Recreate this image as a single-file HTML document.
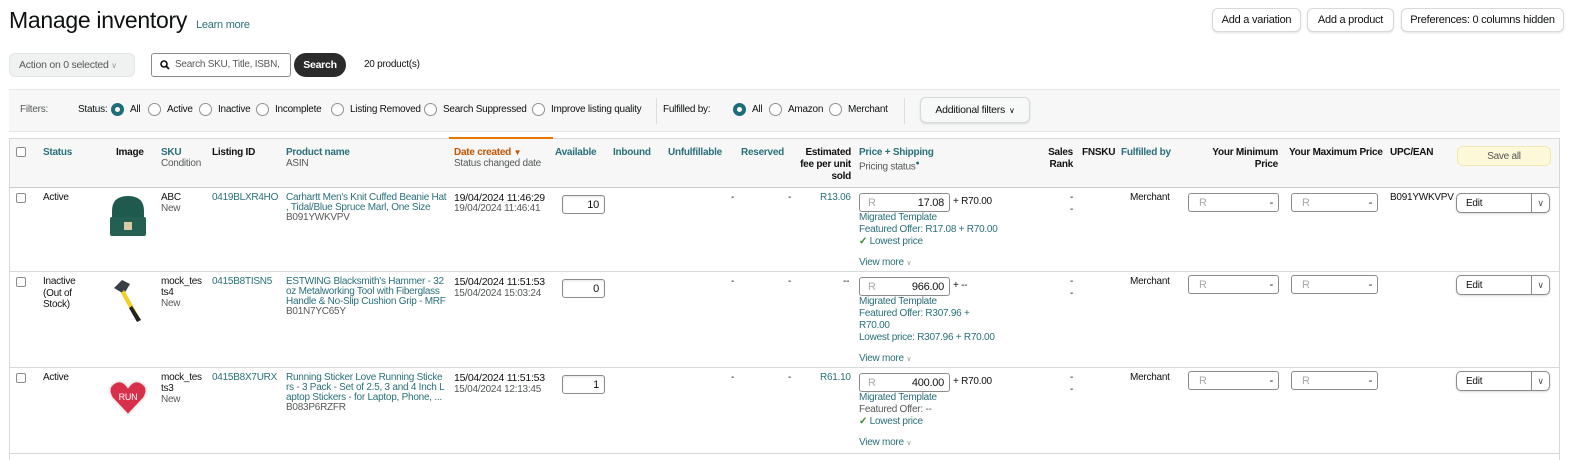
<!DOCTYPE html>
<html><head><meta charset="utf-8">
<style>
*{box-sizing:border-box;margin:0;padding:0}
body{width:1589px;height:460px;overflow:hidden;background:#fff;font-family:"Liberation Sans",sans-serif;font-size:10px;color:#0f1111;position:relative;letter-spacing:-0.25px}
.a{position:absolute;white-space:nowrap;line-height:12px}
.b{font-weight:bold}
.l{color:#2a6f7a}
.g{color:#565959}
.o{color:#c45500}
.btn{position:absolute;border:1px solid #d5d9d9;border-radius:6px;background:#fff;box-shadow:0 1px 2px rgba(0,0,0,.12);font-size:11px;display:flex;align-items:center;justify-content:center}
.rad{position:absolute;width:13px;height:13px;border:1px solid #8d9096;border-radius:50%;background:#fff}
.rad.on{border:4px solid #1f6d7a}
.cb{position:absolute;width:10px;height:10px;border:1px solid #888c8c;border-radius:2px;background:#fff}
.inp{position:absolute;border:1px solid #888c8c;border-radius:3px;background:#fff;height:19px;font-size:11px;padding:0 5px;display:flex;align-items:center;justify-content:flex-end;box-shadow:inset 0 1px 2px rgba(0,0,0,.1)}
.pin{position:absolute;border:1px solid #888c8c;border-radius:3px;height:19px;width:91px;font-size:11px;background:#fff}
.pin span{position:absolute;top:3px}
.hr{position:absolute;left:9px;width:1551px;height:1px;background:#d5d9d9}
.edit{position:absolute;width:94px;height:20px;border:1px solid #888c8c;border-radius:5px;background:#fff;box-shadow:0 1px 2px rgba(0,0,0,.15);font-size:10px}
.edit span{position:absolute;left:9px;top:4px}
.edit i{position:absolute;right:0;top:0;width:18px;height:18px;border-left:1px solid #888c8c;font-style:normal;font-size:9px;text-align:center;line-height:18px;color:#555}
</style></head><body>

<div class="a" style="left:9px;top:7px;font-size:23px;line-height:27px;letter-spacing:-0.3px">Manage inventory</div>
<div class="a l" style="left:196px;top:19px;font-size:11px">Learn more</div>

<div class="btn" style="left:1212px;top:8px;width:89px;height:24px">Add a variation</div>
<div class="btn" style="left:1307px;top:8px;width:87px;height:24px">Add a product</div>
<div class="btn" style="left:1401px;top:8px;width:163px;height:24px">Preferences: 0 columns hidden</div>

<div style="position:absolute;left:9px;top:53px;width:126px;height:24px;background:#f0f2f2;border-radius:6px;border:1px solid #e3e6e6"></div>
<div class="a g" style="left:19px;top:59px;font-size:10.5px">Action on 0 selected <span style="font-size:8px;color:#999">&#8744;</span></div>
<div style="position:absolute;left:151px;top:53px;width:140px;height:24px;border:1px solid #888c8c;border-radius:3px;background:#fff"></div>
<svg style="position:absolute;left:160px;top:60px" width="10" height="10" viewBox="0 0 10 10"><circle cx="4" cy="4" r="3" fill="none" stroke="#111" stroke-width="1.6"/><line x1="6.2" y1="6.2" x2="9" y2="9" stroke="#111" stroke-width="1.8"/></svg>
<div class="a g" style="left:175px;top:59px">Search SKU, Title, ISBN,</div>
<div style="position:absolute;left:294px;top:53px;width:52px;height:24px;border-radius:12px;background:#2b2b2b;color:#fff;font-weight:bold;font-size:10.5px;display:flex;align-items:center;justify-content:center">Search</div>
<div class="a" style="left:364px;top:59px">20 product(s)</div>

<div style="position:absolute;left:9px;top:89px;width:1551px;height:43px;background:#f7f7f7;border-top:1px solid #e7e7e7;border-bottom:1px solid #e7e7e7"></div>
<div class="a g" style="left:20px;top:104px">Filters:</div>
<div class="a" style="left:78px;top:104px">Status:</div>
<div class="rad on" style="left:111px;top:103px"></div><div class="a" style="left:130px;top:104px">All</div>
<div class="rad" style="left:148px;top:103px"></div><div class="a" style="left:167px;top:104px">Active</div>
<div class="rad" style="left:199px;top:103px"></div><div class="a" style="left:218px;top:104px">Inactive</div>
<div class="rad" style="left:256px;top:103px"></div><div class="a" style="left:275px;top:104px">Incomplete</div>
<div class="rad" style="left:331px;top:103px"></div><div class="a" style="left:350px;top:104px">Listing Removed</div>
<div class="rad" style="left:424px;top:103px"></div><div class="a" style="left:443px;top:104px">Search Suppressed</div>
<div class="rad" style="left:532px;top:103px"></div><div class="a" style="left:551px;top:104px">Improve listing quality</div>
<div style="position:absolute;left:656px;top:98px;width:1px;height:26px;background:#ddd"></div>
<div class="a" style="left:663px;top:104px">Fulfilled by:</div>
<div class="rad on" style="left:733px;top:103px"></div><div class="a" style="left:752px;top:104px">All</div>
<div class="rad" style="left:769px;top:103px"></div><div class="a" style="left:788px;top:104px">Amazon</div>
<div class="rad" style="left:829px;top:103px"></div><div class="a" style="left:848px;top:104px">Merchant</div>
<div style="position:absolute;left:904px;top:98px;width:1px;height:26px;background:#ddd"></div>
<div class="btn" style="left:920px;top:97px;width:110px;height:26px;background:#f7f8f8;font-size:10.5px">Additional filters <span style="font-size:8px;margin-left:4px">&#8744;</span></div>

<!-- header -->
<div style="position:absolute;left:9px;top:138px;width:1551px;height:50px;background:#f7f7f7;border:1px solid #d5d9d9;border-bottom-color:#ccc"></div>
<div style="position:absolute;left:449px;top:137px;width:104px;height:2px;background:#e77600"></div>
<div class="cb" style="left:16px;top:147px"></div>
<div class="a b l" style="left:43px;top:147px">Status</div>
<div class="a b" style="left:116px;top:147px">Image</div>
<div class="a b l" style="left:161px;top:147px">SKU</div><div class="a g" style="left:161px;top:158px">Condition</div>
<div class="a b" style="left:212px;top:147px">Listing ID</div>
<div class="a b l" style="left:286px;top:147px">Product name</div><div class="a g" style="left:286px;top:158px">ASIN</div>
<div class="a b o" style="left:454px;top:147px">Date created <span style="font-size:8px">&#9660;</span></div><div class="a g" style="left:454px;top:158px">Status changed date</div>
<div class="a b l" style="left:555px;top:147px">Available</div>
<div class="a b l" style="left:613px;top:147px">Inbound</div>
<div class="a b l" style="left:668px;top:147px">Unfulfillable</div>
<div class="a b l" style="left:741px;top:147px">Reserved</div>
<div class="a b" style="left:799px;top:147px;width:52px;text-align:right;white-space:normal;line-height:12px">Estimated fee per unit sold</div>
<div class="a b l" style="left:859px;top:147px">Price + Shipping</div><div class="a g" style="left:859px;top:158px">Pricing status<sup style="color:#2a6f7a;font-size:7px">&#9679;</sup></div>
<div class="a b" style="left:1040px;top:147px;width:33px;text-align:right;white-space:normal;line-height:11.5px">Sales Rank</div>
<div class="a b" style="left:1082px;top:147px">FNSKU</div>
<div class="a b l" style="left:1121px;top:147px">Fulfilled by</div>
<div class="a b" style="left:1200px;top:147px;width:78px;text-align:right;white-space:normal;line-height:11.5px">Your Minimum Price</div>
<div class="a b" style="left:1289px;top:147px">Your Maximum Price</div>
<div class="a b" style="left:1390px;top:147px">UPC/EAN</div>
<div style="position:absolute;left:1457px;top:146px;width:94px;height:20px;border-radius:6px;background:#fcf8d8;border:1px solid #f0e8b0;font-size:10px;color:#555;display:flex;align-items:center;justify-content:center">Save all</div>

<!-- row 1 -->
<div class="cb" style="left:16px;top:193px"></div>
<div class="a" style="left:43px;top:192px">Active</div>
<svg style="position:absolute;left:106px;top:193px" width="44" height="46" viewBox="0 0 44 46"><path d="M6 18 Q6 3 22 3 Q38 3 38 18 L38 26 L6 26Z" fill="#1f5a4e"/><rect x="4" y="24" width="36" height="19" rx="2" fill="#245f52"/><rect x="18" y="29" width="8" height="8" fill="#d9c9a8"/></svg>
<div class="a" style="left:161px;top:192px">ABC</div><div class="a g" style="left:161px;top:203px">New</div>
<div class="a l" style="left:212px;top:192px">0419BLXR4HO</div>
<div class="a l" style="left:286px;top:192px">Carhartt Men's Knit Cuffed Beanie Hat</div>
<div class="a l" style="left:286px;top:202px">, Tidal/Blue Spruce Marl, One Size</div>
<div class="a g" style="left:286px;top:212px">B091YWKVPV</div>
<div class="a" style="left:454px;top:192px;font-size:10.5px">19/04/2024 11:46:29</div>
<div class="a g" style="left:454px;top:203px">19/04/2024 11:46:41</div>
<div class="inp" style="left:562px;top:195px;width:43px">10</div>
<div class="a" style="left:731px;top:192px">-</div><div class="a" style="left:788px;top:192px">-</div>
<div class="a l" style="left:820px;top:192px">R13.06</div>
<div class="pin" style="left:859px;top:193px"><span style="left:8px;color:#aaa">R</span><span style="right:5px">17.08</span></div>
<div class="a" style="left:953px;top:196px">+ R70.00</div>
<div class="a l" style="left:859px;top:212px">Migrated Template</div>
<div class="a l" style="left:859px;top:224px">Featured Offer: R17.08 + R70.00</div>
<div class="a l" style="left:859px;top:236px"><span style="color:#2e8b2e;font-weight:bold">&#10003;</span> Lowest price</div>
<div class="a l" style="left:859px;top:257px">View more <span style="font-size:7px;color:#999">&#8744;</span></div>
<div class="a" style="left:1070px;top:192px">-</div><div class="a" style="left:1070px;top:204px">-</div>
<div class="a" style="left:1130px;top:192px">Merchant</div>
<div class="pin" style="left:1188px;top:193px;width:91px"><span style="left:10px;color:#aaa">R</span><span style="right:5px">-</span></div>
<div class="pin" style="left:1291px;top:193px;width:87px"><span style="left:10px;color:#aaa">R</span><span style="right:5px">-</span></div>
<div class="a" style="left:1390px;top:192px">B091YWKVPV</div>
<div class="edit" style="left:1456px;top:193px"><span>Edit</span><i>&#8744;</i></div>
<div class="hr" style="top:271px"></div>

<!-- row 2 -->
<div class="cb" style="left:16px;top:277px"></div>
<div class="a" style="left:43px;top:276px;line-height:11.5px">Inactive<br>(Out of<br>Stock)</div>
<svg style="position:absolute;left:108px;top:278px" width="40" height="46" viewBox="0 0 40 46"><path d="M6 10 L14 2 L22 6 L16 16Z" fill="#3a3f47"/><path d="M16 12 L33 42 L29 44 L13 15Z" fill="#f0d020"/><path d="M24 28 L33 42 L29 44 L21 30Z" fill="#222"/></svg>
<div class="a" style="left:161px;top:276px;line-height:11px">mock_tes<br>ts4</div><div class="a g" style="left:161px;top:298px">New</div>
<div class="a l" style="left:212px;top:276px">0415B8TISN5</div>
<div class="a l" style="left:286px;top:276px">ESTWING Blacksmith's Hammer - 32</div>
<div class="a l" style="left:286px;top:286px">oz Metalworking Tool with Fiberglass</div>
<div class="a l" style="left:286px;top:296px">Handle &amp; No-Slip Cushion Grip - MRF</div>
<div class="a g" style="left:286px;top:306px">B01N7YC65Y</div>
<div class="a" style="left:454px;top:276px;font-size:10.5px">15/04/2024 11:51:53</div>
<div class="a g" style="left:454px;top:288px">15/04/2024 15:03:24</div>
<div class="inp" style="left:562px;top:279px;width:43px">0</div>
<div class="a" style="left:731px;top:276px">-</div><div class="a" style="left:788px;top:276px">-</div>
<div class="a" style="left:843px;top:276px">--</div>
<div class="pin" style="left:859px;top:277px"><span style="left:8px;color:#aaa">R</span><span style="right:5px">966.00</span></div>
<div class="a" style="left:953px;top:280px">+ --</div>
<div class="a l" style="left:859px;top:296px">Migrated Template</div>
<div class="a l" style="left:859px;top:308px">Featured Offer: R307.96 +</div>
<div class="a l" style="left:859px;top:320px">R70.00</div>
<div class="a l" style="left:859px;top:332px">Lowest price: R307.96 + R70.00</div>
<div class="a l" style="left:859px;top:353px">View more <span style="font-size:7px;color:#999">&#8744;</span></div>
<div class="a" style="left:1070px;top:276px">-</div><div class="a" style="left:1070px;top:288px">-</div>
<div class="a" style="left:1130px;top:276px">Merchant</div>
<div class="pin" style="left:1188px;top:275px;width:91px"><span style="left:10px;color:#aaa">R</span><span style="right:5px">-</span></div>
<div class="pin" style="left:1291px;top:275px;width:87px"><span style="left:10px;color:#aaa">R</span><span style="right:5px">-</span></div>
<div class="edit" style="left:1456px;top:275px"><span>Edit</span><i>&#8744;</i></div>
<div class="hr" style="top:367px"></div>

<!-- row 3 -->
<div class="cb" style="left:16px;top:373px"></div>
<div class="a" style="left:43px;top:372px">Active</div>
<svg style="position:absolute;left:108px;top:378px" width="40" height="40" viewBox="0 0 40 40"><path d="M20 37 L4 20 Q-2 10 6 5 Q14 0 20 9 Q26 0 34 5 Q42 10 36 20Z" fill="#d8304a" stroke="#eee" stroke-width="2"/><text x="20" y="22" font-size="9" fill="#fff" text-anchor="middle" font-family="Liberation Sans">RUN</text></svg>
<div class="a" style="left:161px;top:372px;line-height:11px">mock_tes<br>ts3</div><div class="a g" style="left:161px;top:394px">New</div>
<div class="a l" style="left:212px;top:372px">0415B8X7URX</div>
<div class="a l" style="left:286px;top:372px">Running Sticker Love Running Sticke</div>
<div class="a l" style="left:286px;top:382px">rs - 3 Pack - Set of 2.5, 3 and 4 Inch L</div>
<div class="a l" style="left:286px;top:392px">aptop Stickers - for Laptop, Phone, ...</div>
<div class="a g" style="left:286px;top:402px">B083P6RZFR</div>
<div class="a" style="left:454px;top:372px;font-size:10.5px">15/04/2024 11:51:53</div>
<div class="a g" style="left:454px;top:384px">15/04/2024 12:13:45</div>
<div class="inp" style="left:562px;top:375px;width:43px">1</div>
<div class="a" style="left:731px;top:372px">-</div><div class="a" style="left:788px;top:372px">-</div>
<div class="a l" style="left:820px;top:372px">R61.10</div>
<div class="pin" style="left:859px;top:373px"><span style="left:8px;color:#aaa">R</span><span style="right:5px">400.00</span></div>
<div class="a" style="left:953px;top:376px">+ R70.00</div>
<div class="a l" style="left:859px;top:392px">Migrated Template</div>
<div class="a g" style="left:859px;top:404px">Featured Offer: --</div>
<div class="a l" style="left:859px;top:416px"><span style="color:#2e8b2e;font-weight:bold">&#10003;</span> Lowest price</div>
<div class="a l" style="left:859px;top:437px">View more <span style="font-size:7px;color:#999">&#8744;</span></div>
<div class="a" style="left:1070px;top:372px">-</div><div class="a" style="left:1070px;top:384px">-</div>
<div class="a" style="left:1130px;top:372px">Merchant</div>
<div class="pin" style="left:1188px;top:371px;width:91px"><span style="left:10px;color:#aaa">R</span><span style="right:5px">-</span></div>
<div class="pin" style="left:1291px;top:371px;width:87px"><span style="left:10px;color:#aaa">R</span><span style="right:5px">-</span></div>
<div class="edit" style="left:1456px;top:371px"><span>Edit</span><i>&#8744;</i></div>
<div class="hr" style="top:453px"></div>
<div style="position:absolute;left:9px;top:188px;width:1px;height:272px;background:#d5d9d9"></div>
<div style="position:absolute;left:1559px;top:188px;width:1px;height:272px;background:#d5d9d9"></div>
</body></html>
